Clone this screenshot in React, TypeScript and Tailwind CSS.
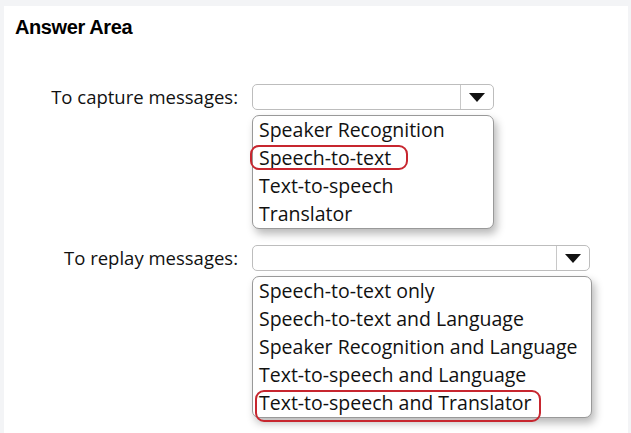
import React from "react";

const font = { fontFamily: '"Open Sans", "Noto Sans", sans-serif' };

function Select({ width, divider }: { width: number; divider: number }) {
  return (
    <div
      className="flex h-[26px] rounded-[5px] border border-[#bdbdbd] bg-white"
      style={{ width }}
    >
      <div className="flex-1" />
      <div className="flex items-center justify-center border-l border-[#c8c8c8]" style={{ width: divider }}>
        <svg width="16" height="9" viewBox="0 0 16 9">
          <polygon points="0,0 16,0 8,9" fill="#111" />
        </svg>
      </div>
    </div>
  );
}

function List({
  width,
  items,
  marked,
  markWidth,
  markHeight,
  markLeft,
}: {
  width: number;
  items: string[];
  marked: number;
  markWidth: number;
  markHeight: number;
  markLeft: number;
}) {
  return (
    <div
      className="relative rounded-[7px] border border-[#999999] bg-white shadow-[3px_5px_8px_rgba(0,0,0,0.28)]"
      style={{ width }}
    >
      {items.map((t, i) => (
        <div key={t} className="relative h-[28px] pl-[6px] text-[19.5px] leading-[28px] text-[#111] whitespace-nowrap">
          {t}
          {i === marked && (
            <div
              className="absolute top-[1px] rounded-[9px] border-2 border-[#c7262f]"
              style={{ width: markWidth, height: markHeight, left: markLeft }}
            />
          )}
        </div>
      ))}
    </div>
  );
}

export default function App() {
  return (
    <div className="h-[433px] w-[631px] bg-[#f3f4f6] pl-[4px] pr-[3px] pt-[6px]" style={font}>
      <div className="h-full bg-white pl-[11px] pt-[9px]">
        <div className="text-[20px] font-bold leading-[24px] tracking-[-0.4px] text-black" style={{ fontFamily: '"Liberation Sans", Arial, sans-serif' }}>
          Answer Area
        </div>
        <div className="mt-[45px] flex gap-[14px]">
          <div className="w-[223px] text-right text-[18.5px] leading-[26px] text-[#111]">To capture messages:</div>
          <div className="flex flex-col gap-[5px]">
            <Select width={242} divider={33} />
            <List
              width={242}
              items={["Speaker Recognition", "Speech-to-text", "Text-to-speech", "Translator"]}
              marked={1}
              markWidth={158}
              markHeight={25}
              markLeft={-3}
            />
          </div>
        </div>
        <div className="mt-[16px] flex gap-[14px]">
          <div className="w-[223px] text-right text-[18.5px] leading-[26px] text-[#111]">To replay messages:</div>
          <div className="flex flex-col gap-[5px]">
            <Select width={338} divider={33} />
            <List
              width={340}
              items={[
                "Speech-to-text only",
                "Speech-to-text and Language",
                "Speaker Recognition and Language",
                "Text-to-speech and Language",
                "Text-to-speech and Translator",
              ]}
              marked={4}
              markWidth={286}
              markHeight={32}
              markLeft={2}
            />
          </div>
        </div>
      </div>
    </div>
  );
}
